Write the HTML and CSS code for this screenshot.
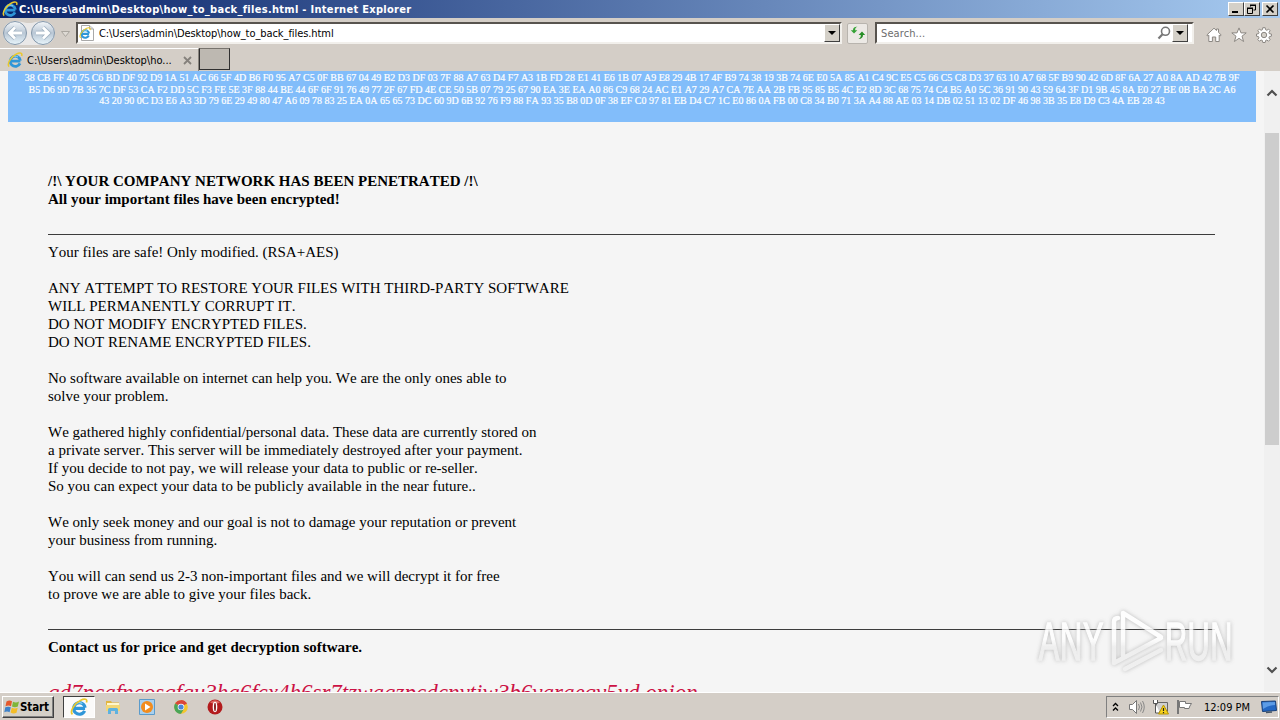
FILE: index.html
```
<!DOCTYPE html>
<html lang="en">
<head>
    <meta charset="UTF-8">
    <title>Internet Explorer</title>
    <link rel="stylesheet" href="styles.css">
</head>
<body>
    <!-- shared icons -->
    <svg class="defs" width="0" height="0">
        <symbol id="ie" viewBox="0 0 16 16">
            <path d="M3 9.2h10.4M13 11.4A5.1 5.1 0 1 1 13.4 8.6" fill="none" stroke="#2f96d8" stroke-width="2.8"/>
            <path d="M4.3 6.5A4.6 4.6 0 0 1 11 5" fill="none" stroke="#8fd4f5" stroke-width="1"/>
            <path d="M2.2 14.6C-.6 12 4 4.600 9.500 2 13 .2 15.800.8 14.600 4" fill="none" stroke="#e9c82c" stroke-width="1.500"/>
        </symbol>
    </svg>

    <div class="titlebar">
        <svg class="icon16"><use href="#ie"/></svg>
        <span class="title-text">C:\Users\admin\Desktop\how_to_back_files.html - Internet Explorer</span>
        <div class="win-buttons">
            <span class="win-btn"><svg width="12" height="10"><path d="M2 8h6" stroke="#000" stroke-width="2"/></svg></span>
            <span class="win-btn"><svg width="12" height="10"><path d="M4.500 1v1.500M4 1.500h6M9.500 1v5H7.500M1.500 4v5.500h5V4M1 4.500h6M4 1h6M1 4h6" fill="none" stroke="#000"/></svg></span>
            <span class="win-btn close"><svg width="12" height="10"><path d="M2.500 1.500l7 7M9.500 1.500l-7 7" stroke="#000" stroke-width="1.700"/></svg></span>
        </div>
    </div>

    <div class="navbar">
        <svg class="nav-arrows" width="74" height="28" viewBox="0 0 74 28">
            <defs>
                <linearGradient id="ball" x1="0" y1="0" x2="0" y2="1">
                    <stop offset="0" stop-color="#f4f7fa"/>
                    <stop offset=".5" stop-color="#b9c7d5"/>
                    <stop offset="1" stop-color="#e8f5fb"/>
                </linearGradient>
            </defs>
            <path d="M15 2c6 0 8 2 14 2s8-2 14-2a12 12 0 0 1 0 24H15a12 12 0 0 1 0-24z" fill="#e9e8e8"/>
            <circle cx="15" cy="14" r="11.500" fill="url(#ball)" stroke="#8497aa"/>
            <circle cx="43" cy="14" r="11.500" fill="url(#ball)" stroke="#8497aa"/>
            <path d="M22 14H10M15 8.500L9.500 14l5.500 5.500" fill="none" stroke="#9fb0c0" stroke-width="4.500"/>
            <path d="M36 14h12M43 8.500l5.500 5.500-5.500 5.500" fill="none" stroke="#9fb0c0" stroke-width="4.500"/>
            <path d="M22 14H10M15 8.500L9.500 14l5.500 5.500" fill="none" stroke="#fff" stroke-width="2.800"/>
            <path d="M36 14h12M43 8.500l5.500 5.500-5.500 5.500" fill="none" stroke="#fff" stroke-width="2.800"/>
            <path d="M61.500 12.500h8l-4 5z" fill="#dedad4" stroke="#aaa69f"/>
        </svg>
        <div class="field address">
            <svg class="page-icon" width="16" height="16" viewBox="0 0 16 16">
                <path d="M2.500.5h8l4 3.500v11.500h-12z" fill="#fff" stroke="#a9a9a9"/>
                <path d="M10.500.5V4h4" fill="#ddd" stroke="#a9a9a9"/>
                <svg x="0" y="2" width="12" height="12"><use href="#ie"/></svg>
            </svg>
            <span class="address-text">C:\Users\admin\Desktop\how_to_back_files.html</span>
            <span class="drop"></span>
        </div>
        <div class="refresh">
            <svg width="16" height="16" viewBox="0 0 16 16">
                <path d="M4 8.500L.8 5.200H3C3 3 4.500 1.500 7.500 1.800 5.700 2.500 5 3.500 5.200 5.200h2.100z" fill="#35a235"/>
                <path d="M12 6.500l3.200 3.600H13c0 2.500-1.500 4-4.500 3.900 1.800-.8 2.500-2 2.300-3.900H8.600z" fill="#278e27"/>
            </svg>
        </div>
        <div class="field search">
            <span class="search-text">Search...</span>
            <svg width="14" height="14" viewBox="0 0 14 14"><circle cx="8.500" cy="5.300" r="4" fill="none" stroke="#777" stroke-width="1.600"/><path d="M5.500 8.300L1.500 12.500" stroke="#777" stroke-width="2.200"/></svg>
            <span class="drop"></span>
        </div>
        <div class="tools">
            <svg width="16" height="16" viewBox="0 0 16 16"><path d="M.8 8L8 1.200l2.500 2.300V2h2v3.300L15.200 8l-1 1-1-.9v6.400H9.700V10H6.400v4.500H2.800V8.100l-1 .9z" fill="#fff" stroke="#8c8883"/></svg>
            <svg width="16" height="16" viewBox="0 0 16 16"><path d="M8 .9l2 5h5.200l-4.200 3.300 1.600 5.300L8 11.300l-4.600 3.200L5 9.200.8 5.900H6z" fill="#fff" stroke="#8c8883"/></svg>
            <svg width="16" height="16" viewBox="0 0 16 16"><path d="M6.800.7h2.400l.4 2 1.300.6 1.700-1.200 1.500 1.600L13 5.400l.4 1.300 2 .3v2.200l-2 .4-.5 1.300 1.200 1.700-1.600 1.600-1.700-1.200-1.200.5-.4 2H6.800l-.4-2-1.300-.5-1.700 1.200-1.600-1.600L3 10.900l-.5-1.300-2-.4V7l2-.3L3 5.400 1.800 3.700l1.600-1.600 1.700 1.200 1.300-.6z" fill="#fff" stroke="#8c8883"/><circle cx="8" cy="8" r="2.700" fill="#d4d0c8" stroke="#8c8883"/></svg>
        </div>
    </div>

    <div class="tabs">
        <div class="tab">
            <svg class="icon16"><use href="#ie"/></svg>
            <span class="tab-text">C:\Users\admin\Desktop\ho...</span>
            <svg width="9" height="9"><path d="M1 1l7 7M8 1L1 8" stroke="#85817c" stroke-width="1.800"/></svg>
        </div>
        <div class="new-tab"></div>
    </div>

    <div class="viewport">
        <div class="page">
            <div class="key">
                <div>38 CB FF 40 75 C6 BD DF 92 D9 1A 51 AC 66 5F 4D B6 F0 95 A7 C5 0F BB 67 04 49 B2 D3 DF 03 7F 88 A7 63 D4 F7 A3 1B FD 28 E1 41 E6 1B 07 A9 E8 29 4B 17 4F B9 74 38 19 3B 74 6E E0 5A 85 A1 C4 9C E5 C5 66 C5 C8 D3 37 63 10 A7 68 5F B9 90 42 6D 8F 6A 27 A0 8A AD 42 7B 9F</div>
                <div>B5 D6 9D 7B 35 7C DF 53 CA F2 DD 5C F3 FE 5E 3F 88 44 BE 44 6F 6F 91 76 49 77 2F 67 FD 4E CE 50 5B 07 79 25 67 90 EA 3E EA A0 86 C9 68 24 AC E1 A7 29 A7 CA 7E AA 2B FB 95 85 B5 4C E2 8D 3C 68 75 74 C4 B5 A0 5C 36 91 90 43 59 64 3F D1 9B 45 8A E0 27 BE 0B BA 2C A6</div>
                <div>43 20 90 0C D3 E6 A3 3D 79 6E 29 49 80 47 A6 09 78 83 25 EA 0A 65 65 73 DC 60 9D 6B 92 76 F9 88 FA 93 35 B8 0D 0F 38 EF C0 97 81 EB D4 C7 1C E0 86 0A FB 00 C8 34 B0 71 3A A4 88 AE 03 14 DB 02 51 13 02 DF 46 98 3B 35 E8 D9 C3 4A EB 28 43</div>
            </div>
            <div class="note">
                <b>/!\ YOUR COMPANY NETWORK HAS BEEN PENETRATED /!\</b><br>
                <b>All your important files have been encrypted!</b>
                <hr>
                Your files are safe! Only modified. (RSA+AES)<br><br>
                ANY ATTEMPT TO RESTORE YOUR FILES WITH THIRD-PARTY SOFTWARE<br>
                WILL PERMANENTLY CORRUPT IT.<br>
                DO NOT MODIFY ENCRYPTED FILES.<br>
                DO NOT RENAME ENCRYPTED FILES.<br><br>
                No software available on internet can help you. We are the only ones able to<br>
                solve your problem.<br><br>
                We gathered highly confidential/personal data. These data are currently stored on<br>
                a private server. This server will be immediately destroyed after your payment.<br>
                If you decide to not pay, we will release your data to public or re-seller.<br>
                So you can expect your data to be publicly available in the near future..<br><br>
                We only seek money and our goal is not to damage your reputation or prevent<br>
                your business from running.<br><br>
                You will can send us 2-3 non-important files and we will decrypt it for free<br>
                to prove we are able to give your files back.
                <hr>
                <b>Contact us for price and get decryption software.</b>
                <div class="onion">qd7pcafncosqfqu3ha6fcx4h6sr7tzwagzpcdcnytiw3b6varaeqv5yd.onion</div>
            </div>
        </div>
        <div class="scrollbar">
            <svg width="12" height="8"><path d="M1.500 6.500L6 2l4.500 4.500" fill="none" stroke="#505050" stroke-width="2.200"/></svg>
            <div class="thumb"></div>
            <svg width="12" height="8"><path d="M1.500 1.500L6 6l4.500-4.500" fill="none" stroke="#505050" stroke-width="2.200"/></svg>
        </div>
        <svg class="watermark" width="204" height="72" viewBox="0 0 204 72">
            <defs>
                <linearGradient id="fade" gradientUnits="userSpaceOnUse" x1="0" y1="8" x2="0" y2="64">
                    <stop offset="0" stop-color="#fff"/>
                    <stop offset=".45" stop-color="#fff"/>
                    <stop offset=".6" stop-color="#ededed"/>
                    <stop offset="1" stop-color="#f0f0f0"/>
                </linearGradient>
            </defs>
            <g transform="scale(.58 1)" font-family="Liberation Sans, sans-serif" font-size="53" fill="url(#fade)" stroke="url(#fade)" stroke-width="1.500">
                <text x="8" y="54" textLength="112">ANY</text>
                <text x="226" y="54" textLength="116">RUN</text>
            </g>
            <path d="M84 12q-4 0-4 4v41l47-25M89 43V7l38 24M89 26v24M91 63l36-19" fill="none" stroke="url(#fade)" stroke-linecap="round" stroke-linejoin="round"/>
        </svg>
    </div>

    <div class="taskbar">
        <div class="start">
            <svg width="16" height="16" viewBox="0 0 16 16">
                <path d="M2.500 2.500q3-1.800 5.500-.2L7 7.200Q4.500 6 1.500 7.300z" fill="#e6592b"/>
                <path d="M9 2.800q3 1.500 6-.2l-1.200 5Q11 9 8 7.600z" fill="#7fb539"/>
                <path d="M1.300 8.300q3-1.300 5.500 0l-1.200 5q-2.500-1.500-5.300 0z" fill="#3f82c9"/>
                <path d="M7.800 8.700q3 1.500 5.900.1l-1.200 5q-3 1.500-5.900-.2z" fill="#f4bd28"/>
            </svg>
            <span>Start</span>
        </div>
        <div class="task-active"><svg width="18" height="18"><use href="#ie"/></svg></div>
        <div class="quick">
            <svg width="16" height="16" viewBox="0 0 16 16"><path d="M1 2h5l1 1.500h7V12H1z" fill="#e2b540"/><path d="M2 4h12v2H2z" fill="#fff6cc"/><path d="M1 6h14v6H1z" fill="#f3d777"/><path d="M3 15v-4.500q0-1.500 1.500-1.500h7q1.500 0 1.500 1.500V15h-3v-3H6v3z" fill="#5fb2df"/></svg>
            <svg width="16" height="16" viewBox="0 0 16 16"><path d="M.5.5h15v15H.5z" fill="#a9d0ee" stroke="#5b9bcb"/><circle cx="8" cy="8" r="6" fill="#f28c1e"/><path d="M6 4.500l5.500 3.500L6 11.500z" fill="#fff"/></svg>
            <svg width="16" height="16" viewBox="0 0 16 16"><circle cx="8" cy="8" r="6.800" fill="#f3c62e"/><path d="M8 8L2.100 4.600a6.800 6.800 0 0 1 11.800 0z" fill="#d9463a"/><path d="M8 8L2.100 4.600A6.800 6.800 0 0 0 8 14.800l3-5z" fill="#4aa558"/><path d="M8 4.600h5.900a6.800 6.800 0 0 0-5.900-3.400z" fill="#d9463a"/><circle cx="8" cy="8" r="3.300" fill="#fff"/><circle cx="8" cy="8" r="2.600" fill="#4a86d8"/></svg>
            <svg width="16" height="16" viewBox="0 0 16 16"><circle cx="8" cy="8" r="7.500" fill="#b31b1d"/><path d="M3 3.500Q8-1 13 3.500 8 6 3 3.500z" fill="#dc6762"/><ellipse cx="8" cy="8" rx="2.300" ry="5.200" fill="#fff"/><ellipse cx="8" cy="8" rx=".9" ry="4.200" fill="#7d0f10"/></svg>
        </div>
        <div class="tray">
            <svg class="chev" width="7" height="10"><path d="M1 4l2.500-2.500L6 4M1 8.500L3.500 6 6 8.500" fill="none" stroke="#000" stroke-width="1.300"/></svg>
            <svg width="17" height="16" viewBox="0 0 17 16"><path d="M1.500 5.500h3l4-4v13l-4-4h-3z" fill="#fff" stroke="#777"/><path d="M10.500 5q2 3 0 6M12.500 3.500q3 4.500 0 9M14.500 2q3.500 6 0 12" fill="none" stroke="#888"/></svg>
            <svg width="17" height="16" viewBox="0 0 17 16"><path d="M4.500 3.500h11v9h-11z" fill="#cfcfcf" stroke="#666"/><path d="M1.500 1v3.500h4V1M3.500 4.500V14H8" fill="#fff" stroke="#555"/><path d="M11.500 6L16.500 15H6.500z" fill="#f7d21c" stroke="#b89500"/><path d="M11.500 9v3M11.500 13v1.200" stroke="#222" stroke-width="1.200"/></svg>
            <svg width="17" height="16" viewBox="0 0 17 16"><path d="M2 1v14" stroke="#777" stroke-width="2"/><path d="M3.500 2.500h6v2h6q-2 2.500-2.500 5H8.500v-1h-5z" fill="#fff" stroke="#777"/></svg>
            <span class="clock">12:09 PM</span>
            <svg width="16" height="14" viewBox="0 0 16 14"><path d="M.5 1.500l14-.500 1 9.500-14 1z" fill="#2368c4" stroke="#173f78"/><path d="M1.500 2.500l12.500-.5v3q-6 0-12 4z" fill="#5c9ce6"/><path d="M5 12.500l6-.5" stroke="#456" stroke-width="1.500"/></svg>
        </div>
    </div>
</body>
</html>
```
FILE: styles.css
```
* {
    box-sizing: border-box;
}

body {
    margin: 0;
    width: 1280px;
    height: 720px;
    overflow: hidden;
    display: flex;
    flex-direction: column;
    background: #d4cec7;
    font-family: "DejaVu Sans Condensed", "DejaVu Sans", sans-serif;
    font-size: 11px;
    color: #000;
}

svg {
    display: block;
    flex: none;
}

.defs {
    position: absolute;
}

.icon16 {
    width: 16px;
    height: 16px;
}

/* title bar */
.titlebar {
    height: 18px;
    flex: none;
    display: flex;
    align-items: center;
    padding: 0 2px;
    gap: 1px;
    background: linear-gradient(90deg, #0a246a, #a6caf0);
}

.title-text {
    color: #fff;
    font-weight: bold;
    letter-spacing: 0.3px;
    white-space: nowrap;
}

.win-buttons {
    display: flex;
    margin-left: auto;
}

.win-btn {
    width: 16px;
    height: 14px;
    padding: 1px;
    background: #d4d0c8;
    border: 1px solid;
    border-color: #fff #404040 #404040 #fff;
}

.close {
    margin-left: 2px;
}

/* address row */
.navbar {
    height: 30px;
    flex: none;
    display: flex;
    align-items: center;
}

.nav-arrows {
    margin-right: 2px;
}

.field {
    height: 22px;
    display: flex;
    align-items: center;
    background: #fff;
    border: 2px solid;
    border-color: #58544f #f2f0ec #f2f0ec #58544f;
    white-space: nowrap;
}

.address {
    width: 766px;
    padding-left: 1px;
    gap: 4px;
}

.address-text {
    letter-spacing: -0.07px;
}

.drop {
    width: 16px;
    height: 18px;
    margin-left: auto;
    display: flex;
    align-items: center;
    justify-content: center;
    background: #d4d0c8;
    border: 1px solid;
    border-color: #fff #404040 #404040 #fff;
}

.drop::after {
    content: "";
    border: 4px solid transparent;
    border-top-color: #000;
    border-bottom: 0;
}

.refresh {
    width: 21px;
    height: 21px;
    margin: 0 7px 0 5px;
    display: flex;
    align-items: center;
    justify-content: center;
    background: #ece9e5;
    border: 1px solid #b8b4ae;
    border-radius: 2px;
}

.search {
    width: 319px;
    padding: 0 4px;
}

.search-text {
    color: #6d6d6d;
    letter-spacing: 0.1px;
    flex: 1;
}

.search .drop {
    margin-left: 1px;
}

.tools {
    display: flex;
    gap: 9px;
    margin: 3px 0 0 12px;
}

/* tabs */
.tabs {
    height: 23px;
    flex: none;
    display: flex;
}

.tab {
    width: 199px;
    display: flex;
    align-items: center;
    padding: 0 6px 0 7px;
    gap: 4px;
    border-top: 1px solid #fff;
    border-right: 1px solid #8a867f;
    white-space: nowrap;
}

.tab-text {
    flex: 1;
}

.new-tab {
    width: 31px;
    height: 22px;
    background: #bdb8b1;
    border: 1px solid #303030;
    border-top-color: #77736d;
}

/* page */
.viewport {
    position: relative;
    height: 621px;
    flex: none;
    display: flex;
    overflow: hidden;
    background: #f5f5f5;
}

.page {
    flex: 1;
    padding: 0 8px;
    font-family: "Liberation Serif", "Times New Roman", serif;
    font-kerning: none;
}

.key {
    height: 51px;
    padding-top: 1px;
    background: #82bdfa;
    color: #fff;
    text-align: center;
    font-size: 10px;
    line-height: 11.7px;
    white-space: nowrap;
    -webkit-text-stroke: 0.2px #fff;
}

.note {
    padding: 50px 41px 0 40px;
    font-size: 15px;
    line-height: 18px;
    white-space: nowrap;
}

.note hr {
    height: 1px;
    margin: 26px 0 8px;
    border: 0;
    background: #3c3c3c;
}

.onion {
    margin-top: 23px;
    color: #cc1144;
    font-size: 23px;
    line-height: 28px;
    font-style: italic;
}

.scrollbar {
    width: 16px;
    display: flex;
    flex-direction: column;
    align-items: center;
    padding: 18px 0;
    background: #f0f0f0;
}

.thumb {
    width: 14px;
    height: 312px;
    margin: 36px 0 auto;
    background: #cdcdcd;
}

.watermark {
    position: absolute;
    left: 1034px;
    top: 535px;
    filter: drop-shadow(0 0 2px #b0b0b0);
    opacity: .85;
}

.watermark path {
    stroke-width: 4.5;
}

/* taskbar */
.taskbar {
    height: 28px;
    flex: none;
    display: flex;
    align-items: center;
    padding: 1px 1px 0 2px;
    border-top: 1px solid #fff;
}

.start {
    width: 52px;
    height: 22px;
    display: flex;
    align-items: center;
    padding-left: 1px;
    background: #d4d0c8;
    border: 1px solid;
    border-color: #fff #404040 #404040 #fff;
    box-shadow: inset -1px -1px #808080;
    font-size: 11.5px;
    font-weight: bold;
    letter-spacing: -0.1px;
}

.task-active {
    width: 32px;
    height: 22px;
    margin-left: 9px;
    display: flex;
    align-items: center;
    justify-content: center;
    background: #fbfaf9;
    border: 1px solid;
    border-color: #404040 #fff #fff #404040;
}

.quick {
    display: flex;
    gap: 18px;
    margin-left: 10px;
}

.tray {
    width: 173px;
    height: 22px;
    margin-left: auto;
    display: flex;
    align-items: center;
    gap: 7px;
    padding: 0 1px 0 5px;
    border: 1px solid;
    border-color: #808080 #fff #fff #808080;
    white-space: nowrap;
}

.chev {
    margin-right: 2px;
}

.clock {
    margin: 0 auto;
}
```
